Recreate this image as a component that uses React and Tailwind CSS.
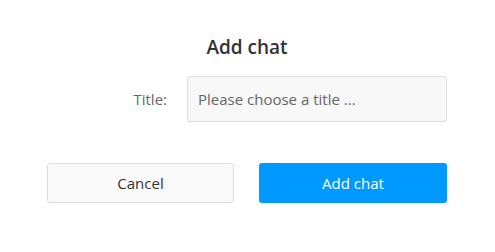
import React from "react";

export default function App() {
  return (
    <div
      className="w-[495px] h-[252px] bg-white pl-[47px] pt-[34px]"
      style={{ fontFamily: '"Open Sans", "Noto Sans", sans-serif' }}
    >
      <div className="w-[400px] flex flex-col items-center">
        <h2 className="text-[19px] leading-[26px] font-semibold text-[#333333]">Add chat</h2>
        <div className="mt-[16px] flex items-center w-[400px]">
          <label className="w-[140px] pr-[20px] text-right text-[15px] text-[#666666]">Title:</label>
          <input
            type="text"
            placeholder="Please choose a title ..."
            className="w-[260px] h-[46px] px-[10px] bg-[#f8f8f8] border border-[#dddddd] rounded-[3px] text-[15px] text-[#333] placeholder:text-[#666666] outline-none"
          />
        </div>
        <div className="mt-[41px] flex gap-[25px] w-[400px]">
          <button className="w-[187px] h-[40px] bg-[#fafafa] border border-[#dddddd] rounded-[3px] text-[15px] text-[#333333]">
            Cancel
          </button>
          <button className="w-[188px] h-[40px] bg-[#0099ff] rounded-[3px] text-[15px] text-white">
            Add chat
          </button>
        </div>
      </div>
    </div>
  );
}
